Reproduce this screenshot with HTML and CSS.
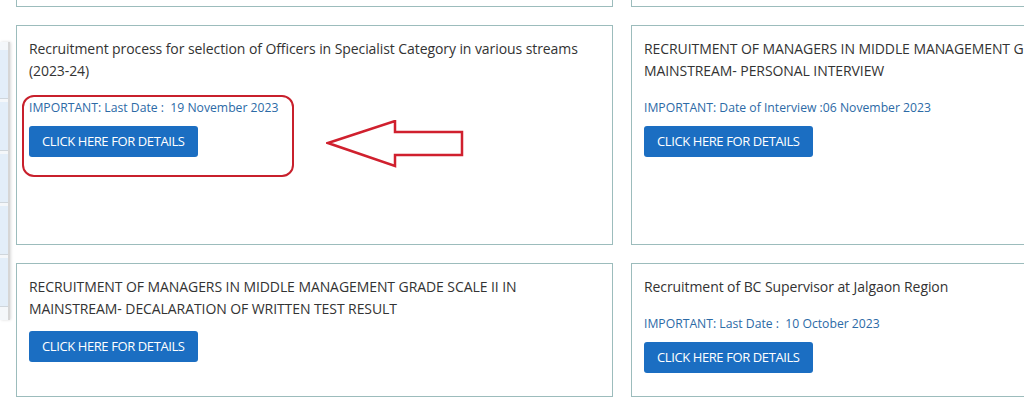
FILE: index.html
```html
<!DOCTYPE html>
<html lang="en">
<head>
    <meta charset="UTF-8">
    <meta name="viewport" content="width=device-width, initial-scale=1.0">
    <title>Recruitment / Careers</title>
    <link rel="stylesheet" href="styles.css">
</head>
<body>
    <div class="side-tab">
        <div class="side-item"></div>
        <div class="side-item"></div>
        <div class="side-item"></div>
        <div class="side-item"></div>
        <div class="side-item"></div>
    </div>

    <div class="notice-grid">
        <div class="notice-card top-card"></div>
        <div class="notice-card top-card"></div>

        <div class="notice-card tall highlight-wrap">
            <p class="notice-title">Recruitment process for selection of Officers in Specialist Category in various streams (2023-24)</p>
            <p class="notice-date">IMPORTANT: Last Date :&nbsp; 19 November 2023</p>
            <a class="details-btn" href="#">CLICK HERE FOR DETAILS</a>
            <div class="red-box"></div>
            <svg class="red-arrow" width="140" height="50" viewBox="0 0 140 50">
                <polygon points="2,23 69,1 69,12 136,12 136,35 69,35 69,46" fill="none" stroke="#d0202e" stroke-width="2.5" stroke-linejoin="miter"/>
            </svg>
        </div>
        <div class="notice-card tall">
            <p class="notice-title">RECRUITMENT OF MANAGERS IN MIDDLE MANAGEMENT GRADE SCALE II IN MAINSTREAM- PERSONAL INTERVIEW</p>
            <p class="notice-date">IMPORTANT: Date of Interview :06 November 2023</p>
            <a class="details-btn" href="#">CLICK HERE FOR DETAILS</a>
        </div>

        <div class="notice-card">
            <p class="notice-title">RECRUITMENT OF MANAGERS IN MIDDLE MANAGEMENT GRADE SCALE II IN MAINSTREAM- DECALARATION OF WRITTEN TEST RESULT</p>
            <a class="details-btn" href="#">CLICK HERE FOR DETAILS</a>
        </div>
        <div class="notice-card">
            <p class="notice-title">Recruitment of BC Supervisor at Jalgaon Region</p>
            <p class="notice-date">IMPORTANT: Last Date :&nbsp; 10 October 2023</p>
            <a class="details-btn" href="#">CLICK HERE FOR DETAILS</a>
        </div>
    </div>
</body>
</html>
```

FILE: styles.css
```css
html, body {
    margin: 0;
    padding: 0;
    background-color: #fff;
    overflow: hidden;
}
body {
    font-family: "Open Sans", "Noto Sans", Arial, sans-serif;
    color: #333;
    height: 410px;
}
.notice-grid {
    display: grid;
    grid-template-columns: 597px 597px;
    column-gap: 18px;
    row-gap: 18px;
    padding-left: 16px;
    margin-top: -144px;
    width: 1300px;
}
.notice-card {
    border: 1px solid #9cbcbc;
    padding: 12px 13px 23px 12px;
    background-color: #fff;
}
.top-card {
    height: 114px;
}
.tall {
    min-height: 183px;
}
.highlight-wrap {
    position: relative;
}
.notice-title {
    margin: 0 0 11px 0;
    font-size: 14px;
    line-height: 22px;
    letter-spacing: -0.08px;
    color: #333;
}
.notice-date {
    margin: 0 0 9px 0;
    padding-top: 6px;
    font-size: 12.2px;
    line-height: 18px;
    color: #2c6aa6;
}
.details-btn {
    display: inline-block;
    background-color: #1b6ec2;
    color: #fff;
    text-decoration: none;
    font-size: 13px;
    line-height: 19px;
    padding: 6px 13px;
    border-radius: 3px;
    letter-spacing: -0.4px;
}
.red-box {
    position: absolute;
    left: 5px;
    top: 69px;
    width: 268px;
    height: 78px;
    border: 2.5px solid #c8202c;
    border-radius: 12px;
}
.red-arrow {
    position: absolute;
    left: 309px;
    top: 94px;
}
.side-tab {
    position: fixed;
    left: 0;
    top: 42px;
    width: 8px;
    height: 270px;
    background-color: #f4f7fa;
    border-right: 2px solid #d6d6d6;
    box-shadow: 1px 0 3px rgba(0, 0, 0, 0.15);
    display: flex;
    flex-direction: column;
    gap: 3px;
    padding-top: 8px;
    z-index: 2;
}
.side-item {
    height: 48px;
    background-color: #e3eef9;
    border-bottom: 1px solid #cfd6dc;
}
```
